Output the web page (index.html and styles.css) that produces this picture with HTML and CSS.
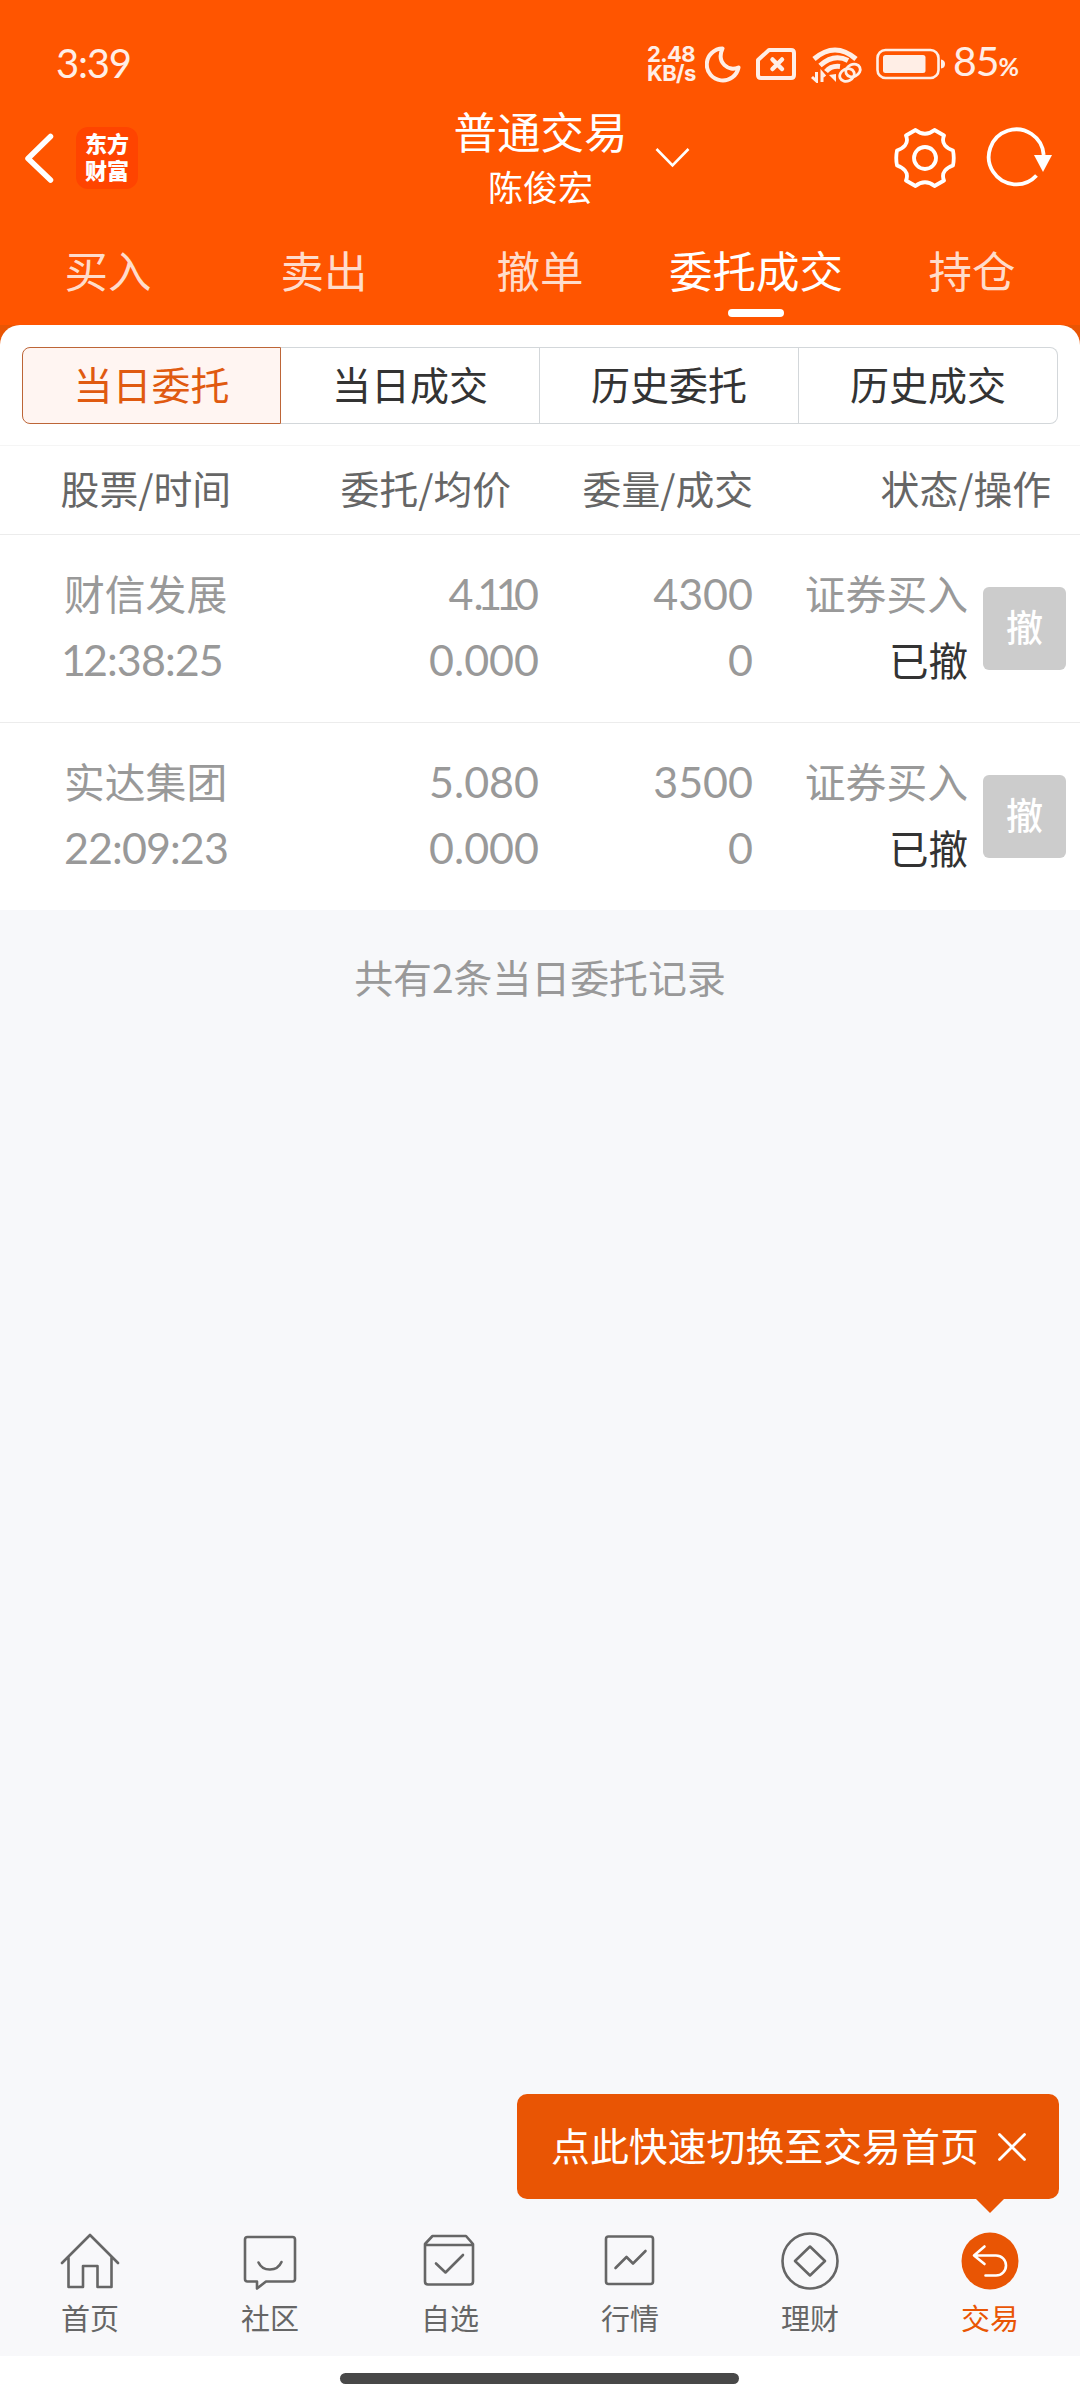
FILE: index.html
```html
<!DOCTYPE html>
<html lang="zh-CN">
<head>
<meta charset="utf-8">
<title>普通交易</title>
<link rel="stylesheet" href="styles.css">
</head>
<body>
<div class="app">
  <header class="header">
    <div class="status-bar">
      <span class="clock">3:39</span>
      <div class="status-icons">
        <div class="net-speed"><span>2.48</span><span>KB/s</span></div>
        <svg class="moon" width="36" height="38" viewBox="0 0 36 38" fill="none" stroke="#ffeee6" stroke-width="4" stroke-linejoin="round"><path d="M17.500 3.500A16 16 0 1 0 33.500 22.500C24 27 11 18 17.500 3.500Z"/></svg>
        <svg class="sim" width="42" height="34" viewBox="0 0 42 34" fill="none" stroke="#ffeee6" stroke-width="4" stroke-linejoin="round" stroke-linecap="round"><path d="M14 3H36Q39 3 39 6V28Q39 31 36 31H6Q3 31 3 28V13Z"/><path d="M17.500 12.500 27 22M27 12.500 17.500 22" stroke-width="4.500"/></svg>
        <svg class="wifi" width="52" height="38" viewBox="0 0 52 38" fill="none" stroke="#ffeee6" stroke-width="5"><path d="M3 14Q24-4 45 14"/><path d="M9 20.500Q23 8 37 15.500"/><path d="M15 26.500Q20 20.500 29 21.500"/><path d="M5.500 27V36L1 32M11 37V28L14 31.500" stroke-width="3"/><path d="M18 30 25 29V37Z" fill="#ffeee6" stroke="none"/><g stroke-width="2.800"><ellipse cx="42" cy="25.500" rx="7.500" ry="6" transform="rotate(-25 42 25.500)"/><ellipse cx="36" cy="30" rx="7.500" ry="6" transform="rotate(-25 36 30)"/></g></svg>
        <svg class="battery" width="70" height="32" viewBox="0 0 70 32"><rect x="1.500" y="2" width="61" height="28" rx="8" fill="none" stroke="#ffeee6" stroke-width="2.600"/><rect x="7" y="7" width="42.500" height="18" rx="2.500" fill="#ffeee6"/><path d="M65 11.500q4 .5 4 4.500t-4 4.500z" fill="#ffeee6"/></svg>
        <span class="percent">85<small>%</small></span>
      </div>
    </div>
    <div class="title-bar">
      <div class="title-left">
        <svg width="32" height="52" viewBox="0 0 32 52" fill="none" stroke="#fff" stroke-width="5.500" stroke-linecap="round" stroke-linejoin="round"><path d="M27.500 4.500 5 26.500 27.500 48"/></svg>
        <div class="brand"><span>东方</span><span>财富</span></div>
      </div>
      <div class="title-text">
        <h1>普通交易</h1>
        <p>陈俊宏</p>
      </div>
      <svg class="chevron" width="36" height="22" viewBox="0 0 36 22" fill="none" stroke="#fff" stroke-width="2.600"><path d="M1.500 2 17.500 18.500 33.500 2"/></svg>
      <div class="title-actions">
        <svg width="62" height="62" viewBox="-31 -31 62 62" fill="none" stroke="#fff" stroke-width="3.800" stroke-linejoin="round"><path d="M-9.500-28-19-22.500C-15.500-14-22-9.500-28-7.500Q-29.500 0-28 7.500C-22 9.500-15.500 14-19 22.500L-9.500 28Q0 20.500 9.500 28L19 22.500C15.500 14 22 9.500 28 7.500Q29.500 0 28-7.500C22-9.500 15.500-14 19-22.500L9.500-28Q0-20.500-9.500-28Z"/><circle r="11"/></svg>
        <svg width="66" height="62" viewBox="-30 -31 66 62"><path d="M20.500 17.500A27.500 27.500 0 1 1 27.700-3" fill="none" stroke="#fff" stroke-width="3.800"/><path d="M18-3H36L27 14Z" fill="#fff"/></svg>
      </div>
    </div>
    <nav class="tabs">
      <span class="tab">买入</span>
      <span class="tab">卖出</span>
      <span class="tab">撤单</span>
      <span class="tab active">委托成交</span>
      <span class="tab">持仓</span>
    </nav>
  </header>

  <main class="main">
    <div class="panel-wrap">
      <div class="panel">
        <div class="segments">
          <span class="segment selected">当日委托</span>
          <span class="segment">当日成交</span>
          <span class="segment">历史委托</span>
          <span class="segment">历史成交</span>
        </div>
      </div>
    </div>
    <div class="table-head">
      <span>股票/时间</span>
      <span>委托/均价</span>
      <span>委量/成交</span>
      <span>状态/操作</span>
    </div>
    <div class="order">
      <div class="cell name"><span>财信发展</span><span class="num time"><span class="lead-one">1</span>2:38:25</span></div>
      <div class="cell"><span class="num">4<span class="ones">.11</span>0</span><span class="num">0.000</span></div>
      <div class="cell"><span class="num">4300</span><span class="num">0</span></div>
      <div class="cell"><span>证券买入</span><span class="state">已撤</span></div>
      <button class="cancel">撤</button>
    </div>
    <div class="order">
      <div class="cell name"><span>实达集团</span><span class="num time">22:09:23</span></div>
      <div class="cell"><span class="num">5.080</span><span class="num">0.000</span></div>
      <div class="cell"><span class="num">3500</span><span class="num">0</span></div>
      <div class="cell"><span>证券买入</span><span class="state">已撤</span></div>
      <button class="cancel">撤</button>
    </div>
    <p class="summary">共有2条当日委托记录</p>
  </main>

  <footer class="bottom-nav">
    <div class="tip">
      <span>点此快速切换至交易首页</span>
      <svg width="30" height="30" viewBox="0 0 30 30" stroke="#fff" stroke-width="2.800" stroke-linecap="round"><path d="M2.500 2.500 27.500 27.500M27.500 2.500 2.500 27.500"/></svg>
    </div>
    <a class="nav-item"><svg width="62" height="62" viewBox="0 0 62 62"><path d="M3 34 31 6 59 34M9.500 28.500V58H24V37H38.500V58H52.500V28.500"/></svg><span>首页</span></a>
    <a class="nav-item"><svg width="62" height="62" viewBox="0 0 62 62"><path d="M8.500 8H53.500Q56 8 56 10.500V50Q56 52.500 53.500 52.500H27L18 59.500V52.500H8.500Q6 52.500 6 50V10.500Q6 8 8.500 8Z"/><path d="M19.500 33.500C24 43 38 43 42.500 33"/></svg><span>社区</span></a>
    <a class="nav-item"><svg width="62" height="62" viewBox="0 0 62 62"><path d="M6 15V52.500Q6 55.500 9 55.500H51Q54 55.500 54 52.500V15L47 7H13.500L6 15ZM6 16H54"/><path d="M17 34.500 26.500 43.500 44 26"/></svg><span>自选</span></a>
    <a class="nav-item"><svg width="62" height="62" viewBox="0 0 62 62"><rect x="7" y="7.500" width="47" height="47.500" rx="2.500"/><path d="M16.500 39 27.500 28 34 34.500 46.500 22"/></svg><span>行情</span></a>
    <a class="nav-item"><svg width="62" height="62" viewBox="0 0 62 62"><circle cx="31" cy="32" r="27.500"/><path d="M31 17.500 46 32 31 46.500 16 32Z"/></svg><span>理财</span></a>
    <a class="nav-item current"><svg width="62" height="62" viewBox="0 0 62 62"><circle class="disc" cx="31" cy="32" r="28.500"/><path d="M25.500 17.500 15 26.500 25.500 35M15 26.500H37A10 10 0 0 1 37 46.500H26.500"/></svg><span>交易</span></a>
  </footer>
  <div class="gesture-bar"><i></i></div>
</div>
</body>
</html>
```
FILE: styles.css
```css
* { box-sizing: border-box; }

body {
  margin: 0;
  font-family: "Noto Sans CJK SC", sans-serif;
  color: #333;
}

h1, p { margin: 0; font-weight: 400; }

svg { display: block; flex: none; }

.app {
  display: flex;
  flex-direction: column;
  width: 1080px;
  height: 2400px;
  background: #f7f8fa;
}

/* Header */
.header {
  height: 325px;
  background: #ff5500;
  color: #fff;
}

.status-bar {
  display: flex;
  justify-content: space-between;
  height: 101px;
  padding: 40px 62px 0 56px;
  color: #ffeee6;
  font-family: Lato, sans-serif;
}

.clock {
  font-size: 40px;
  line-height: 47px;
  letter-spacing: -1.2px;
}

.status-icons {
  display: flex;
  align-items: center;
  height: 47px;
}

.net-speed {
  display: flex;
  flex-direction: column;
  width: 58px;
  font: 700 22px/18.5px Inter, sans-serif;
  letter-spacing: -0.6px;
}

.sim { margin-left: 14px; }
.wifi { margin-left: 14px; }
.battery { margin-left: 13px; }

.percent {
  margin-left: 7px;
  font-size: 41px;
  line-height: 47px;
  letter-spacing: -1px;
  white-space: nowrap;
}

.percent small { font-size: 25px; font-weight: 700; }

.title-bar {
  position: relative;
  display: grid;
  grid-template-columns: 1fr auto 1fr;
  height: 111px;
  padding: 0 28px 0 23px;
}

.title-left {
  display: flex;
  align-items: center;
  gap: 21px;
  padding-top: 3px;
}

.brand {
  display: flex;
  flex-direction: column;
  align-items: center;
  justify-content: center;
  width: 62px;
  height: 62px;
  padding-bottom: 5px;
  border-radius: 12px;
  background: #ff4400;
  font-size: 22px;
  font-weight: 900;
  line-height: 27px;
}

.title-text {
  padding-left: 6px;
  text-align: center;
}

.title-text h1 { font-size: 43.5px; line-height: 60px; }
.title-text p { font-size: 35px; line-height: 49px; }

.chevron {
  position: absolute;
  left: 655px;
  top: 46px;
}

.title-actions {
  display: flex;
  align-items: center;
  justify-content: flex-end;
  gap: 30px;
  padding-top: 3px;
}

.tabs {
  display: grid;
  grid-template-columns: repeat(5, 1fr);
  height: 113px;
}

.tab {
  position: relative;
  padding-top: 26px;
  color: #ffdccb;
  font-size: 43.5px;
  line-height: 64px;
  text-align: center;
}

.tab.active { color: #fff; }

.tab.active::after {
  content: "";
  position: absolute;
  left: 50%;
  bottom: 8px;
  width: 56px;
  height: 8px;
  margin-left: -28px;
  border-radius: 4px;
  background: #fff;
}

/* Orders */
.main { flex: 1; }

.panel-wrap {
  background: linear-gradient(#e95504 24px, #fff 24px);
}

.panel {
  height: 121px;
  padding: 22px 22px 0;
  border-radius: 20px 20px 0 0;
  border-bottom: 1px solid #f5f5f5;
  background: #fff;
}

.segments {
  display: grid;
  grid-template-columns: repeat(4, 1fr);
  height: 77px;
}

.segment {
  border: 1px solid #d3d7da;
  border-left-width: 0;
  font-size: 39px;
  line-height: 71px;
  text-align: center;
}

.segment:last-child { border-radius: 0 8px 8px 0; }

.segment.selected {
  border: 1px solid #bd6537;
  border-radius: 8px 0 0 8px;
  background: #fff5f2;
  color: #e05a10;
}

.table-head {
  display: grid;
  grid-template-columns: 231px 280px 242px 298px;
  height: 89px;
  border-bottom: 1px solid #ececec;
  background: #fff;
  color: #666;
  font-size: 38.8px;
  line-height: 83px;
  text-align: right;
}

.order {
  display: grid;
  grid-template-columns: 239px 236px 214px 215px 83px;
  height: 188px;
  padding: 27px 14px 0 64px;
  border-bottom: 1px solid #ececec;
  background: #fff;
  color: #999;
  font-size: 40.8px;
}

.order + .order { height: 187px; border-bottom: 0; }

.cell {
  display: flex;
  flex-direction: column;
  align-items: flex-end;
  margin-top: -2px;
  line-height: 66px;
}

.cell.name { align-items: flex-start; }

.num {
  padding-top: 2px;
  font-family: Lato, sans-serif;
  font-size: 43px;
  line-height: 64px;
}

.num.time { letter-spacing: -0.9px; }
.lead-one { margin-left: -3px; letter-spacing: -3px; }
.ones { letter-spacing: -6.5px; }

.state { color: #333; font-size: 39.5px; }

.cancel {
  width: 83px;
  height: 83px;
  margin: 25px 0 0 15px;
  padding: 0;
  border: 0;
  border-radius: 6px;
  background: #ccc;
  color: #fff;
  font: 500 37px/77px "Noto Sans CJK SC", sans-serif;
}

.cancel { padding-bottom: 4px; }

.summary {
  padding-top: 37px;
  color: #999;
  font-size: 38.9px;
  line-height: 58px;
  text-align: center;
}

/* Bottom navigation */
.bottom-nav {
  position: relative;
  display: grid;
  grid-template-columns: repeat(6, 1fr);
  height: 131px;
  background: #f8f8fa;
}

.nav-item {
  display: flex;
  flex-direction: column;
  align-items: center;
  padding-top: 4px;
  color: #666;
  font-size: 29px;
  line-height: 44px;
}

.nav-item svg {
  fill: none;
  stroke: #666;
  stroke-width: 2.6;
  stroke-linecap: round;
  stroke-linejoin: round;
}

.nav-item span { margin-top: 4px; }
.nav-item.current { color: #e95504; }
.nav-item.current svg { stroke: #fff; }
.nav-item .disc { fill: #e95504; stroke: none; }

.tip {
  position: absolute;
  left: 517px;
  top: -131px;
  display: flex;
  align-items: center;
  justify-content: space-between;
  width: 542px;
  height: 105px;
  padding: 0 32px 0 34px;
  border-radius: 10px;
  background: #e95504;
  color: #fff;
  font-size: 38.9px;
  white-space: nowrap;
}

.tip span { padding-bottom: 6px; }

.tip::after {
  content: "";
  position: absolute;
  left: 459px;
  top: 105px;
  border: 14px solid transparent;
  border-top-color: #e95504;
  border-bottom: 0;
}

.gesture-bar {
  display: flex;
  justify-content: center;
  height: 44px;
  padding: 17px 1px 0 0;
  background: #fff;
}

.gesture-bar i {
  width: 399px;
  height: 11px;
  border-radius: 6px;
  background: #484848;
}
```
